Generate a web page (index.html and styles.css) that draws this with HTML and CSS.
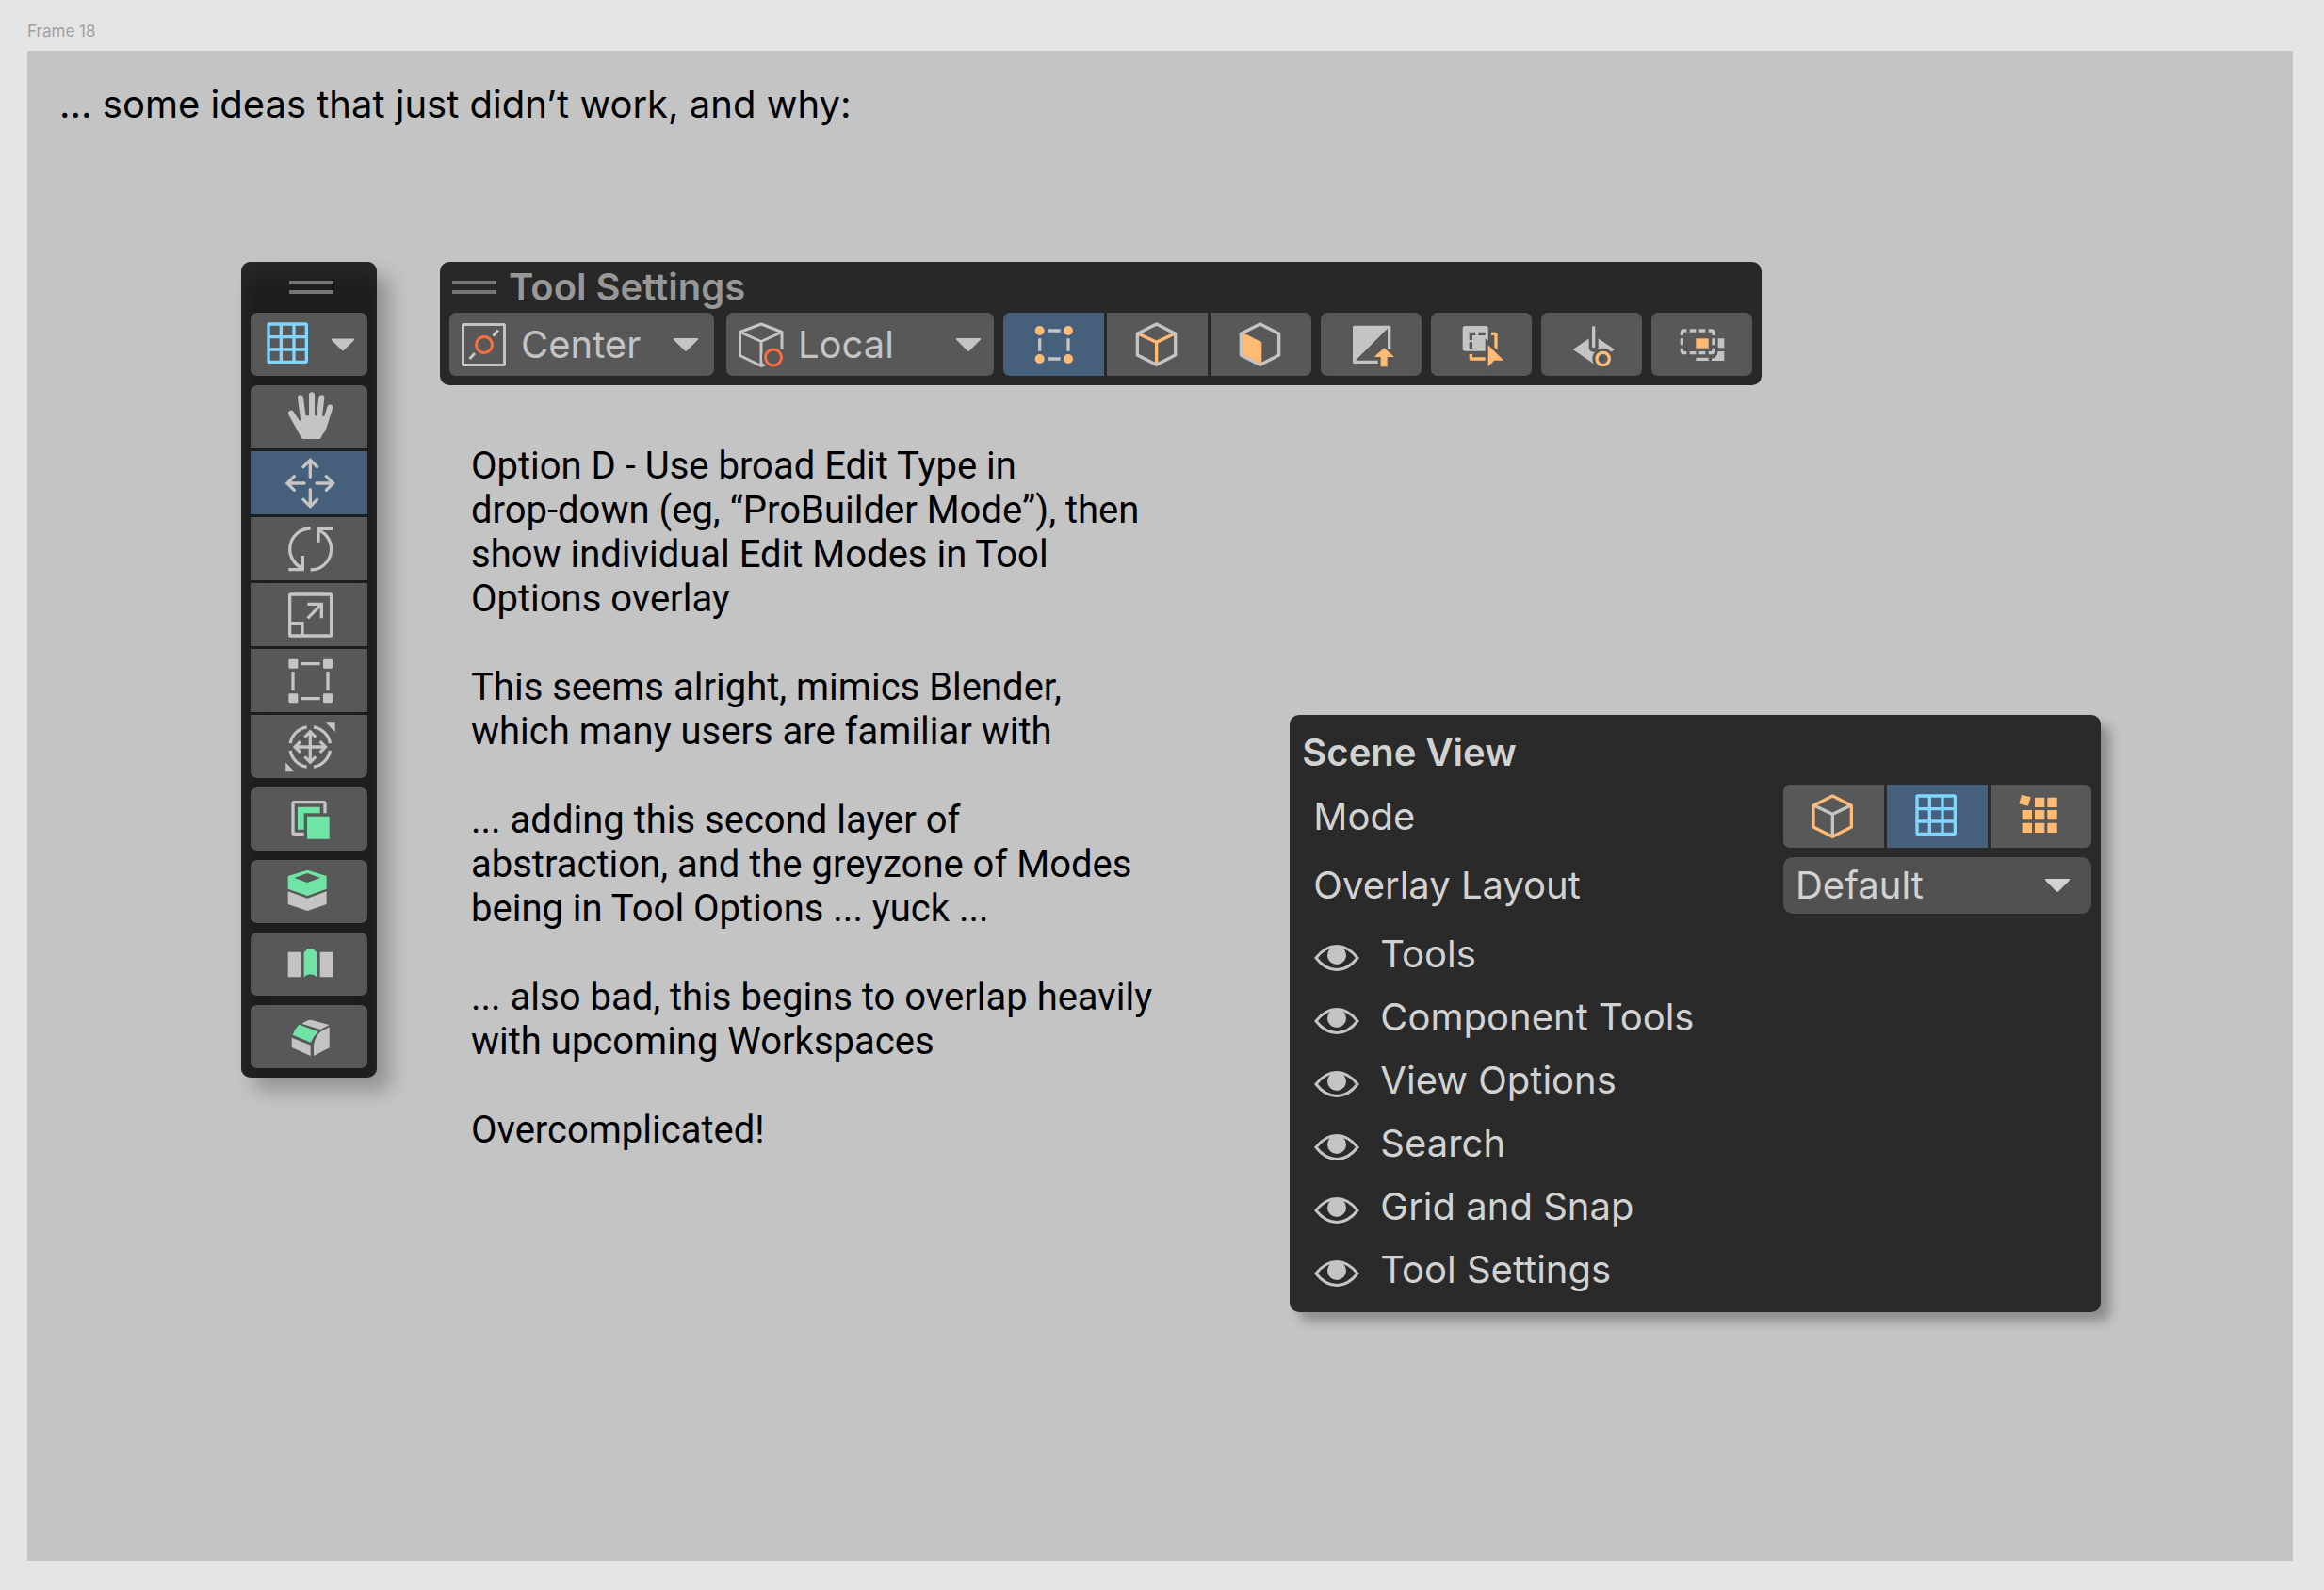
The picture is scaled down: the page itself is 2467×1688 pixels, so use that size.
FILE: index.html
```html
<!DOCTYPE html>
<html lang="en">
<head>
    <meta charset="UTF-8">
    <meta name="viewport" content="width=device-width, initial-scale=1.0">
    <title>Frame 18</title>
    <link rel="stylesheet" href="styles.css">
</head>
<body>
    <!-- Shared icons -->
    <svg class="sprite" aria-hidden="true">
        <symbol id="caret" viewBox="0 0 26 14"><path d="M1 0H25Q27 0 25.500 2L14 13.500Q13 14 12 13.500L0.500 2Q-1 0 1 0z"/></symbol>
        <symbol id="grid" viewBox="-84 -84 168 168">
            <rect class="line" x="-66" y="-66" width="121" height="121" rx="3"/>
            <path class="line" d="M-26 -66V55M15 -66V55M-66 -25H55M-66 15H55"/>
        </symbol>
        <symbol id="eye" viewBox="0 0 48 28">
            <path d="M2 14C9 5 16 1.500 24 1.500S39 5 46 14C39 23 32 26.500 24 26.500S9 23 2 14z" fill="none" stroke="currentColor" stroke-width="3"/>
            <circle cx="24" cy="11" r="10"/>
        </symbol>
    </svg>

    <p class="frame-label">Frame 18</p>
    <main class="frame">
        <h1>... some ideas that just didn’t work, and why:</h1>

        <div class="board">
            <!-- Vertical tool strip -->
            <aside class="panel rail">
                <div class="grip"></div>
                <button class="btn mode-menu" aria-label="Edit mode" aria-haspopup="menu">
                    <svg class="icon sky"><use href="#grid"/></svg>
                    <svg class="caret"><use href="#caret"/></svg>
                </button>
                <div class="group vertical">
                    <button class="btn" aria-label="Hand">
                        <svg class="icon" viewBox="-84 -84 168 168">
                            <path class="finger" d="M-57 -13L-25 35M-27 -62L-17 14M9 -71V14M40 -62L31 14M67 -31L44 40"/>
                            <path d="M-64 -7L-26 62Q-22 69 -18 69H32Q36 69 38 65L54 35L60 0L38 -5L-10 -5L-28 12z"/>
                        </svg>
                    </button>
                    <button class="btn active" aria-label="Move" aria-pressed="true">
                        <svg class="icon" viewBox="-84 -84 168 168">
                            <path class="line" stroke-linecap="round" d="M4 -20V-72M-18 -52L4 -74L26 -52M4 20V72M-18 52L4 74L26 52M-15 0H-70M-47 -22L-69 0L-47 22M24 0H77M55 -22L77 0L55 22"/>
                        </svg>
                    </button>
                    <button class="btn" aria-label="Rotate">
                        <svg class="icon" viewBox="-84 -84 168 168">
                            <path class="line" d="M5 -66A66 66 0 0 0 -20 61M5 66A66 66 0 0 0 30 -61M75 -65H30V-22M-65 65H-20V21"/>
                        </svg>
                    </button>
                    <button class="btn" aria-label="Scale">
                        <svg class="icon" viewBox="-84 -84 168 168">
                            <rect class="line" x="-61" y="-66" width="132" height="132" rx="3"/>
                            <path class="line" d="M-61 26H-21V66M-4 10L39 -34M-5 -35H40V10"/>
                        </svg>
                    </button>
                    <button class="btn" aria-label="Rect">
                        <svg class="icon" viewBox="-84 -84 168 168">
                            <rect x="-65" y="-70" width="30" height="30" rx="4"/>
                            <rect x="45" y="-70" width="30" height="30" rx="4"/>
                            <rect x="-65" y="40" width="30" height="30" rx="4"/>
                            <rect x="45" y="40" width="30" height="30" rx="4"/>
                            <path class="line" d="M-25 -55H35M-25 56H35M-51 -30V30M60 -30V30"/>
                        </svg>
                    </button>
                    <button class="btn" aria-label="Transform">
                        <svg class="icon" viewBox="-86 -86 172 172">
                            <path class="line" d="M15 -65A66 66 0 0 1 69 -12M-7 -65A66 66 0 0 0 -61 -12M15 65A66 66 0 0 0 69 12M-7 65A66 66 0 0 1 -61 12"/>
                            <path class="line" d="M4 -50V50M-46 0H54M-14 -32L4 -50L22 -32M-14 32L4 50L22 32M-28 -18L-46 0L-28 18M36 -18L54 0L36 18"/>
                            <path d="M55 -79H85V-49zM-76 51L-47 81H-76z"/>
                        </svg>
                    </button>
                </div>
                <button class="btn" aria-label="Extrude">
                    <svg class="icon" viewBox="-84 -84 168 168">
                        <path class="line" d="M51 -20V-52Q51 -55 48 -55H-48Q-51 -55 -51 -52V43Q-51 46 -48 46H-16"/>
                        <path class="mint" d="M-36 -40H35V-20H-16V32H-36zM-6 -10H65V62H-6z"/>
                    </svg>
                </button>
                <button class="btn" aria-label="Inset">
                    <svg class="icon" viewBox="-84 -84 168 168">
                        <path class="mint" fill-rule="evenodd" d="M-67 -51L-5 -70L56 -51V-10L-5 12L-67 -10zM-47 -45L-5 -30L36 -45L-5 -60z"/>
                        <path d="M-67 -2L-5 20L56 -2V39L-5 60L-67 39z"/>
                    </svg>
                </button>
                <button class="btn" aria-label="Bridge">
                    <svg class="icon" viewBox="-84 -84 168 168">
                        <path d="M-67 -40H-25V40H-67zM35 -40H76V40H35z"/>
                        <path class="mint" d="M-16 40V-38Q4 -64 25 -38V40Q4 22 -16 40z"/>
                    </svg>
                </button>
                <button class="btn" aria-label="Bevel">
                    <svg class="icon" viewBox="-84 -84 168 168">
                        <path d="M-23 -43Q0 -57 8 -54L65 -39L36 -24z"/>
                        <path class="mint" d="M-32 -40L29 -17Q14 -2 6 17L-52 -7Q-44 -28 -32 -40z"/>
                        <path d="M-55 2L5 26V60L-55 33zM65 -32V34L15 60V26Q20 -3 37 -17z"/>
                    </svg>
                </button>
            </aside>

            <div class="workspace">
                <!-- Tool settings bar -->
                <section class="panel toolbar">
                    <header>
                        <div class="grip"></div>
                        <h2>Tool Settings</h2>
                    </header>
                    <div class="tools">
                        <div class="dropdown">
                            <select aria-label="Pivot">
                                <option>Center</option>
                                <option>Pivot</option>
                            </select>
                            <svg class="glyph" viewBox="0 0 50 50">
                                <rect x="2.500" y="3.500" width="44" height="43" rx="1" fill="none" stroke="currentColor" stroke-width="3"/>
                                <path d="M40 9.500L34.500 15.500M15 34L9.500 40" stroke="currentColor" stroke-width="3"/>
                                <circle class="ring" cx="25" cy="25" r="8.500"/>
                            </svg>
                            <svg class="caret"><use href="#caret"/></svg>
                        </div>
                        <div class="dropdown wide">
                            <select aria-label="Handle rotation">
                                <option>Local</option>
                                <option>Global</option>
                            </select>
                            <svg class="glyph" viewBox="0 0 50 50">
                                <path d="M47 30V11.500L25 3L2.500 11.500V36.500L25 47.500L30 45.500M2.500 11.500L25 21.500L47 11.500M25 21.500V47" fill="none" stroke="currentColor" stroke-width="3" stroke-linejoin="round"/>
                                <circle class="hole" cx="38" cy="38.500" r="12"/>
                                <circle class="ring" cx="38" cy="38.500" r="8.500"/>
                            </svg>
                            <svg class="caret"><use href="#caret"/></svg>
                        </div>
                        <div class="group">
                            <button class="btn active" aria-label="Vertices" aria-pressed="true">
                                <svg class="icon" viewBox="-84 -84 168 168">
                                    <path class="line" d="M-20 -45H20M-20 45H20M-46 -20V20M45 -20V20"/>
                                    <g class="orange">
                                        <circle cx="-46" cy="-45" r="15"/>
                                        <circle cx="45" cy="-45" r="15"/>
                                        <circle cx="-46" cy="45" r="15"/>
                                        <circle cx="45" cy="45" r="15"/>
                                    </g>
                                </svg>
                            </button>
                            <button class="btn" aria-label="Edges">
                                <svg class="icon" viewBox="-84 -84 168 168">
                                    <path class="line orange" d="M-65 -37L-4 -8L56 -37M-4 -8V64"/>
                                    <path class="line" stroke-linejoin="round" d="M-4 -66L56 -35V33L-4 64L-65 33V-35z"/>
                                </svg>
                            </button>
                            <button class="btn" aria-label="Faces">
                                <svg class="icon" viewBox="-84 -84 168 168">
                                    <path class="line" stroke-linejoin="round" d="M-4 -66L56 -35V33L-4 64L-65 33V-35z"/>
                                    <path class="orange" d="M-60 -39L1 -8V62L-60 31z"/>
                                </svg>
                            </button>
                        </div>
                        <button class="btn" aria-label="Select by material">
                            <svg class="icon" viewBox="-84 -84 168 168">
                                <path class="line" stroke-linejoin="round" d="M56 14V-56H-55V55H20"/>
                                <path d="M-56 -57H56L-56 55z"/>
                                <path class="orange" d="M40 10L70 37V39H50V68Q50 70 48 70H31Q29 70 29 68V39H10V37z"/>
                            </svg>
                        </button>
                        <button class="btn" aria-label="Select through">
                            <svg class="icon" viewBox="-84 -84 168 168">
                                <rect x="-61" y="-60" width="81" height="80" rx="8"/>
                                <path class="line dark" d="M-35 -15V-35H-20M-11 -35H11M-35 -8V13"/>
                                <path class="line orange" stroke-linejoin="round" d="M30 -35H45V16M-35 30V45H14"/>
                                <path class="orange cursor" d="M20 1L70 50H40L20 70z"/>
                            </svg>
                        </button>
                        <button class="btn" aria-label="Set pivot">
                            <svg class="icon" viewBox="-84 -84 168 168">
                                <path d="M-61 15L5 -30L72 15L5 61z"/>
                                <path class="line dark thick" stroke-linecap="round" d="M5 -40V8"/>
                                <path class="line" stroke-linecap="round" d="M5 -55V5"/>
                                <circle class="hole" cx="35" cy="45" r="34"/>
                                <circle class="line orange" cx="35" cy="45" r="20"/>
                            </svg>
                        </button>
                        <button class="btn" aria-label="Rect select">
                            <svg class="icon" viewBox="-84 -84 168 168">
                                <path class="line" d="M-65 -30V-38Q-65 -45 -58 -45H-50M-40 -45H-20M-10 -45H10M20 -45H29Q36 -45 36 -38V-30M36 -20V1M36 11V19Q36 26 29 26H20M10 26H-10M-20 26H-40M-50 26H-58Q-65 26 -65 19V11M-65 1V-20"/>
                                <path class="orange" d="M-20 -20H20V11H-20z"/>
                                <path d="M50 -20H70V10H50zM70 21V51H30V44Q48 42 50 21zM-20 41H20V51H-20z"/>
                            </svg>
                        </button>
                    </div>
                </section>

                <div class="lower">
                    <article class="notes">
                        <p>Option D - Use broad Edit Type in<br>
                            drop-down (eg, “ProBuilder Mode”), then<br>
                            show individual Edit Modes in Tool<br>
                            Options overlay</p>
                        <p>This seems alright, mimics Blender,<br>
                            which many users are familiar with</p>
                        <p>... adding this second layer of<br>
                            abstraction, and the greyzone of Modes<br>
                            being in Tool Options ... yuck ...</p>
                        <p>... also bad, this begins to overlap heavily<br>
                            with upcoming Workspaces</p>
                        <p>Overcomplicated!</p>
                    </article>

                    <!-- Scene view overlay menu -->
                    <section class="panel scene">
                        <h2>Scene View</h2>
                        <div class="row">
                            <span id="modeLabel">Mode</span>
                            <div class="group" role="group" aria-labelledby="modeLabel">
                                <button class="btn" aria-label="Object">
                                    <svg class="icon" viewBox="-84 -84 168 168">
                                        <path class="line" d="M-66 -37L-5 -8L55 -37M-5 -8V64"/>
                                        <path class="line orange" stroke-linejoin="round" d="M-5 -66L55 -35V33L-5 64L-66 33V-35z"/>
                                    </svg>
                                </button>
                                <button class="btn active" aria-label="Grid" aria-pressed="true">
                                    <svg class="icon sky"><use href="#grid"/></svg>
                                </button>
                                <button class="btn" aria-label="Pieces">
                                    <svg class="icon" viewBox="-84 -84 168 168">
                                        <path class="orange" d="M-21 -61h31v31h-31zM19 -61h31v31h-31zM-61 -21h31v31h-31zM-21 -21h31v31h-31zM19 -21h31v31h-31zM-61 20h31v31h-31zM-21 20h31v31h-31zM19 20h31v31h-31z"/>
                                        <path class="orange" d="M-63 -70L-34 -62L-42 -34L-71 -41z"/>
                                    </svg>
                                </button>
                            </div>
                        </div>
                        <div class="row">
                            <label for="layout">Overlay Layout</label>
                            <div class="dropdown layout">
                                <select id="layout">
                                    <option>Default</option>
                                </select>
                                <svg class="caret"><use href="#caret"/></svg>
                            </div>
                        </div>
                        <ul>
                            <li><button class="overlay"><svg><use href="#eye"/></svg>Tools</button></li>
                            <li><button class="overlay"><svg><use href="#eye"/></svg>Component Tools</button></li>
                            <li><button class="overlay"><svg><use href="#eye"/></svg>View Options</button></li>
                            <li><button class="overlay"><svg><use href="#eye"/></svg>Search</button></li>
                            <li><button class="overlay"><svg><use href="#eye"/></svg>Grid and Snap</button></li>
                            <li><button class="overlay"><svg><use href="#eye"/></svg>Tool Settings</button></li>
                        </ul>
                    </section>
                </div>
            </div>
        </div>
    </main>
</body>
</html>
```
FILE: styles.css
```css
* {
    box-sizing: border-box;
}
body {
    display: flex;
    flex-direction: column;
    min-height: 100vh;
    margin: 0;
    padding: 22px 33px 31px 29px;
    background: #e5e5e5;
    color: #000;
    font-family: Inter, sans-serif;
    font-size: 40px;
    line-height: 48px;
}
h1, h2, p, ul {
    margin: 0;
    padding: 0;
    font-size: inherit;
}
.sprite {
    display: none;
}
.frame-label {
    margin-bottom: 10px;
    color: #a0a0a0;
    font-size: 17px;
    line-height: 22px;
}
.frame {
    flex: 1;
    padding: 33px 204px 32px 34px;
    background: #c4c4c4;
}
h1 {
    font-weight: 400;
}
.board {
    display: flex;
    align-items: flex-start;
    gap: 67px;
    margin: 143px 0 0 193px;
}
.workspace {
    flex: 1;
}

/* Panels */
.panel {
    border-radius: 10px;
    background: #282828;
    color: #c4c4c4;
}
.grip {
    width: 47px;
    height: 14px;
    border: solid #757575;
    border-width: 4px 0;
}
.rail {
    display: flex;
    flex-direction: column;
    align-items: stretch;
    gap: 10px;
    padding: 20px 10px 10px;
    background: #1e1e1e;
    box-shadow: inset 4px 12px 20px #282828, 14px 14px 20px rgba(0, 0, 0, 0.25);
}
.rail .grip {
    align-self: center;
    margin: 0 0 10px 4px;
}

/* Buttons */
.btn {
    display: flex;
    align-items: center;
    justify-content: center;
    width: 107px;
    height: 67px;
    padding: 0;
    border: none;
    border-radius: 7px;
    background: #585858;
    color: #c4c4c4;
    cursor: pointer;
}
.btn.active {
    background: #46607c;
}
.rail .btn {
    width: 124px;
}
.mode-menu {
    justify-content: space-between;
    padding: 0 14px 0 13px;
}
.group {
    display: flex;
    gap: 3px;
}
.group .btn {
    border-radius: 0;
}
.group .btn:first-child {
    border-radius: 7px 0 0 7px;
}
.group .btn:last-child {
    border-radius: 0 7px 7px 0;
}
.group.vertical {
    flex-direction: column;
}
.group.vertical .btn:first-child {
    border-radius: 7px 7px 0 0;
}
.group.vertical .btn:last-child {
    border-radius: 0 0 7px 7px;
}

/* Icons */
svg {
    fill: currentColor;
}
.icon {
    width: 56px;
    height: 56px;
}
.line {
    fill: none;
    stroke: currentColor;
    stroke-width: 10px;
}
.finger {
    fill: none;
    stroke: currentColor;
    stroke-width: 18px;
    stroke-linecap: round;
}
.sky {
    color: #81d5ff;
}
.orange {
    color: #ffba74;
    fill: currentColor;
}
.line.orange {
    fill: none;
}
.mint {
    fill: #70e3a6;
}
.dark {
    color: #585858;
}
.thick {
    stroke-width: 30px;
}
.hole {
    fill: #585858;
}
.ring {
    fill: none;
    stroke: #ff6e42;
    stroke-width: 3px;
}
.cursor {
    stroke: #585858;
    stroke-width: 18px;
    paint-order: stroke;
}
.caret {
    width: 26px;
    height: 14px;
}
.mode-menu .caret {
    width: 24px;
}

/* Drop-downs */
.dropdown {
    display: grid;
    grid-template-columns: auto 1fr auto;
    align-items: center;
    width: 281px;
    height: 67px;
    margin-right: 3px;
    padding-right: 17px;
    border-radius: 7px;
    background: #585858;
}
.dropdown.wide {
    width: 284px;
    margin-right: 0;
    padding-right: 14px;
}
.dropdown select {
    grid-area: 1 / 1 / 2 / 4;
    height: 100%;
    padding: 0 0 0 76px;
    border: none;
    background: transparent;
    color: inherit;
    font: inherit;
    appearance: none;
}
.dropdown svg {
    grid-row: 1;
    pointer-events: none;
}
.dropdown .glyph {
    grid-column: 1;
    width: 50px;
    height: 50px;
    margin-left: 12px;
}
.dropdown .caret {
    grid-column: 3;
}
.dropdown.layout {
    width: 327px;
    height: 60px;
    margin: 0;
    padding-right: 23px;
    border-radius: 10px;
    background: #515151;
}
.dropdown.layout select {
    padding-left: 13px;
}

/* Tool settings */
.toolbar {
    width: fit-content;
    padding: 0 10px 10px;
}
.toolbar header {
    display: flex;
    align-items: center;
    gap: 13px;
    height: 54px;
    padding-left: 3px;
}
.toolbar h2 {
    color: #989898;
    font-weight: 600;
}
.tools {
    display: flex;
    gap: 10px;
}

/* Notes and scene menu */
.lower {
    display: grid;
    grid-template-columns: 46fr 47fr;
    align-items: start;
    gap: 60px;
}
.notes {
    padding: 62px 0 0 33px;
    font-family: Roboto, sans-serif;
    line-height: 47px;
    white-space: nowrap;
}
.notes p + p {
    margin-top: 47px;
}
.scene {
    margin-top: 350px;
    padding: 16px 10px 12px;
    background: #2a2a2a;
    color: #d2d2d2;
    box-shadow: 10px 10px 12px rgba(0, 0, 0, 0.28);
}
.scene h2 {
    padding-left: 3px;
    font-weight: 600;
}
.row {
    display: flex;
    align-items: center;
    justify-content: space-between;
    margin-top: 10px;
    padding-left: 15px;
}
.scene ul {
    margin-top: 9px;
    list-style: none;
}
.overlay {
    display: flex;
    align-items: center;
    gap: 22px;
    width: 100%;
    height: 67px;
    padding: 0 16px;
    border: none;
    background: transparent;
    color: inherit;
    font: inherit;
    cursor: pointer;
}
.overlay svg {
    width: 48px;
    height: 28px;
    margin-top: 8px;
    color: #c4c4c4;
}
```
